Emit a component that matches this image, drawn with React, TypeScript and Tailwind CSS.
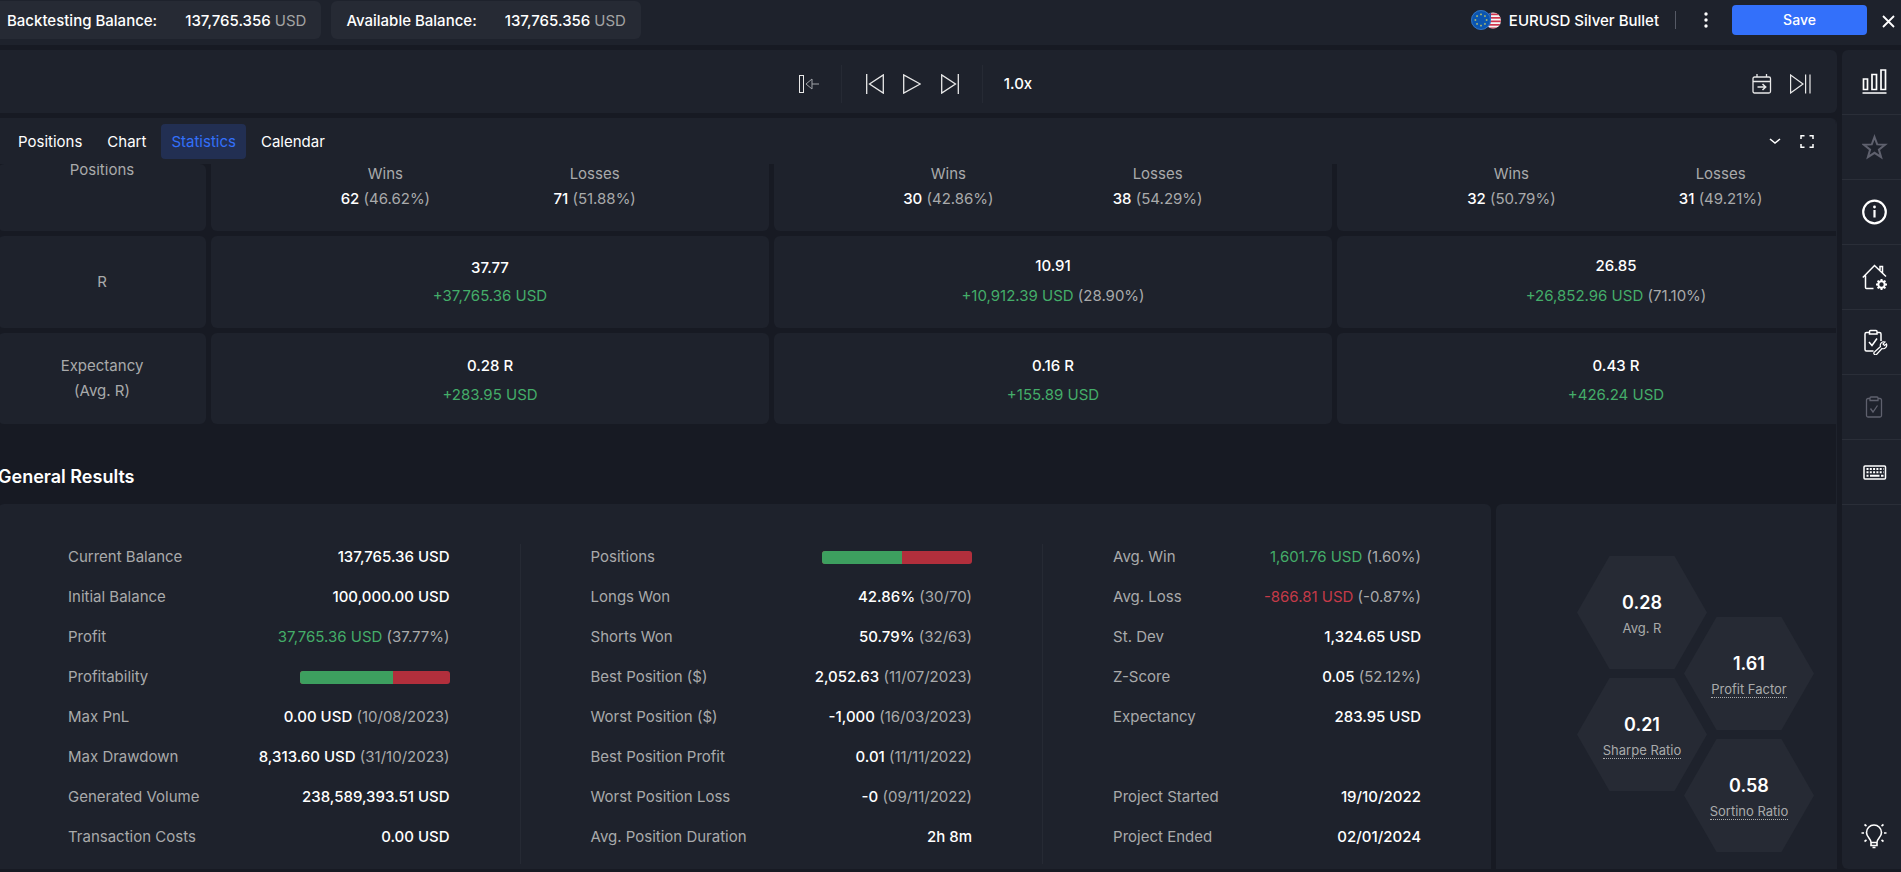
import type { ReactNode } from "react";

const font = "font-['Inter','Liberation_Sans',sans-serif]";

function Balance({ label, value }: { label: string; value: string }) {
	return (
		<div className="flex h-[38px] items-center gap-7 rounded-md bg-[#262a34] pl-[15px] pr-[15px] pt-0.5">
			<span className="font-medium">{label}</span>
			<span className="font-medium">
				{value} <span className="font-normal text-[#a3a3a3]">USD</span>
			</span>
		</div>
	);
}

function Flags() {
	return (
		<svg width="30" height="20" viewBox="0 0 30 20" aria-hidden="true">
			<clipPath id="us">
				<circle cx="22" cy="10.5" r="8" />
			</clipPath>
			<g clipPath="url(#us)">
				<rect x="12" width="20" height="20" fill="#f4f4f4" />
				{[3.5, 7, 10.5, 14, 17.5].map((y) => (
					<rect key={y} x="12" y={y} width="20" height="1.7" fill="#d0334d" />
				))}
				<rect x="12" width="8" height="10" fill="#2c4fa3" />
			</g>
			<circle cx="10" cy="10" r="10" fill="#0b55b0" />
			<circle cx="10" cy="10" r="9.5" fill="none" stroke="#3f7cc4" strokeWidth="0.8" />
			{[0, 45, 90, 135, 180, 225, 270, 315].map((a) => (
				<rect
					key={a}
					x="9.2"
					y="3.6"
					width="1.6"
					height="1.6"
					fill="#b9c46a"
					transform={`rotate(${a} 10 10)`}
				/>
			))}
		</svg>
	);
}

function TopBar() {
	return (
		<header className="flex h-[45px] items-start justify-between bg-[#1e222c] pt-px">
			<div className="-ml-2 flex gap-[10px]">
				<Balance label="Backtesting Balance:" value="137,765.356" />
				<Balance label="Available Balance:" value="137,765.356" />
			</div>
			<div className="flex h-[38px] items-center pr-[6px]">
				<Flags />
				<span className="ml-2 pt-0.5 font-medium">EURUSD Silver Bullet</span>
				<span className="ml-4 h-[18px] w-px bg-[#565a66]" />
				<button aria-label="More" className="ml-5 flex h-6 w-5 items-center justify-center">
					<svg width="4" height="16" viewBox="0 0 4 16" fill="#fff">
						<circle cx="2" cy="2" r="1.7" />
						<circle cx="2" cy="8" r="1.7" />
						<circle cx="2" cy="14" r="1.7" />
					</svg>
				</button>
				<button className="ml-4 h-[30px] w-[135px] rounded bg-[#3370fa] text-sm font-medium">
					Save
				</button>
				<button aria-label="Close" className="ml-[15px] pt-0.5">
					<svg width="13" height="13" viewBox="0 0 13 13" stroke="#fff" strokeWidth="1.8">
						<path d="M1 1l11 11M12 1L1 12" />
					</svg>
				</button>
			</div>
		</header>
	);
}

function Toolbar() {
	return (
		<div className="grid h-[63px] grid-cols-[1fr_auto_1fr] items-center rounded-r-md bg-[#1e222c] pt-1">
			<span />
			<div className="flex items-center">
				<button aria-label="Jump back">
					<svg width="20" height="18" viewBox="0 0 20 18" fill="none" stroke="#e8e8e8">
						<rect x="0.5" y="0.5" width="4" height="17" />
						<path d="M7 9l6-5v10zM13 9h7" stroke="#a0a3a8" />
					</svg>
				</button>
				<span className="ml-[22px] h-[38px] w-px bg-[#262a34]" />
				<button aria-label="Previous" className="ml-6">
					<svg width="18" height="20" viewBox="0 0 18 20" fill="none" stroke="#e8e8e8" strokeWidth="1.3">
						<path d="M0.7 0v20M17.3 0.9v18.2L3.5 10z" />
					</svg>
				</button>
				<button aria-label="Play" className="ml-[19px]">
					<svg width="18" height="20" viewBox="0 0 18 20" fill="none" stroke="#e8e8e8" strokeWidth="1.3">
						<path d="M0.7 0.9v18.2L17.2 10z" />
					</svg>
				</button>
				<button aria-label="Next" className="ml-5">
					<svg width="18" height="20" viewBox="0 0 18 20" fill="none" stroke="#e8e8e8" strokeWidth="1.3">
						<path d="M17.3 0v20M0.7 0.9v18.2L14.5 10z" />
					</svg>
				</button>
				<span className="ml-[23px] h-[38px] w-px bg-[#262a34]" />
				<button className="ml-[21px] mr-1.5 pt-0.5 font-medium">1.0x</button>
			</div>
			<div className="flex items-center justify-end gap-[18px] pr-[26px]">
				<button aria-label="Go to date">
					<svg width="20" height="20" viewBox="0 0 20 20" fill="none" stroke="#e8e8e8" strokeWidth="1.3">
						<rect x="1" y="3" width="17.5" height="16" rx="1.5" />
						<path d="M1 7.5h17.5M5 0v3M14.5 0v3" />
						<path d="M5.5 13h8M10.5 10l3.2 3-3.2 3" strokeWidth="1.5" />
					</svg>
				</button>
				<button aria-label="Play to end">
					<svg width="21" height="20" viewBox="0 0 21 20" fill="none" stroke="#e8e8e8" strokeWidth="1.2">
						<path d="M0.6 1v18L13 10zM15.6 0.5v19M20 0.5v19" />
					</svg>
				</button>
			</div>
		</div>
	);
}

function Tabs() {
	const tabs = ["Positions", "Chart", "Statistics", "Calendar"];
	return (
		<div className="flex h-[46px] items-center justify-between pl-2 pr-[22px]">
			<nav className="flex gap-[5px]">
				{tabs.map((tab) => (
					<button
						key={tab}
						className={
							tab === "Statistics"
								? "h-[35px] rounded bg-[#222f52] px-[10px] pt-0.5 text-[#3370fa]"
								: "h-[35px] px-[10px] pt-0.5"
						}
					>
						{tab}
					</button>
				))}
			</nav>
			<div className="flex items-center gap-[19px]">
				<button aria-label="Collapse">
					<svg width="12" height="7" viewBox="0 0 12 7" fill="none" stroke="#fff" strokeWidth="1.6">
						<path d="M1 1l5 4 5-4" />
					</svg>
				</button>
				<button aria-label="Full screen">
					<svg width="14" height="13" viewBox="0 0 14 13" fill="none" stroke="#fff" strokeWidth="1.5">
						<path d="M4.5 0.8H1V4M9.5 0.8H13V4M4.5 12.2H1V9M9.5 12.2H13V9" />
					</svg>
				</button>
			</div>
		</div>
	);
}

function Label({ children }: { children: ReactNode }) {
	return (
		<th className="rounded-md bg-[#1e222c] p-0 pb-0.5 font-normal leading-[25px] text-[#a9aaab]">{children}</th>
	);
}

const positions = [
	{ wins: "62", winsPct: "(46.62%)", losses: "71", lossesPct: "(51.88%)" },
	{ wins: "30", winsPct: "(42.86%)", losses: "38", lossesPct: "(54.29%)" },
	{ wins: "32", winsPct: "(50.79%)", losses: "31", lossesPct: "(49.21%)" },
];

const returns = [
	{ r: "37.77", usd: "+37,765.36 USD", pct: "" },
	{ r: "10.91", usd: "+10,912.39 USD", pct: "(28.90%)" },
	{ r: "26.85", usd: "+26,852.96 USD", pct: "(71.10%)" },
];

const expectancy = [
	{ r: "0.28 R", usd: "+283.95 USD" },
	{ r: "0.16 R", usd: "+155.89 USD" },
	{ r: "0.43 R", usd: "+426.24 USD" },
];

function ResultCell({ r, usd, pct, className }: { r: string; usd: string; pct?: string; className: string }) {
	return (
		<td className={`rounded-md bg-[#1e222c] px-0 text-center ${className}`}>
			<div className="font-medium">{r}</div>
			<div className="text-[#a9aaab]">
				<span className="text-[#44ad69]">{usd}</span> {pct}
			</div>
		</td>
	);
}

function SummaryTable() {
	return (
		<table className="-my-[5px] -ml-[7px] w-[calc(100%+71px)] table-fixed border-separate border-spacing-[5px] bg-[#171a23]">
			<colgroup>
				<col className="w-[208px]" />
				<col />
				<col />
				<col />
			</colgroup>
			<tbody>
				<tr className="h-[67px] align-top">
					<Label>
						<div className="leading-3">Positions</div>
					</Label>
					{positions.map((p) => (
						<td key={p.wins} className="rounded-b-md bg-[#1e222c] p-0 text-center leading-[25px] text-[#a9aaab]">
							<div className="mx-auto -mt-[3px] grid w-3/4 grid-cols-2">
								<span>Wins</span>
								<span>Losses</span>
								<span>
									<span className="font-medium text-white">{p.wins}</span> {p.winsPct}
								</span>
								<span>
									<span className="font-medium text-white">{p.losses}</span> {p.lossesPct}
								</span>
							</div>
						</td>
					))}
				</tr>
				<tr className="h-[92px]">
					<Label>R</Label>
					{returns.map((c) => (
						<ResultCell key={c.r} {...c} className={c.pct ? "pb-0.5 pt-0 leading-[30px]" : "py-0 leading-7"} />
					))}
				</tr>
				<tr className="h-[91px]">
					<Label>
						Expectancy
						<br />
						(Avg. R)
					</Label>
					{expectancy.map((c) => (
						<ResultCell key={c.r} {...c} className="pb-0 pt-[3px] leading-[29px]" />
					))}
				</tr>
			</tbody>
		</table>
	);
}

function Bar({ value }: { value: number }) {
	return (
		<div className="flex h-[13px] w-[150px] overflow-hidden rounded-[3px] bg-[#b22f3c]">
			<div className="bg-[#3d9f5f]" style={{ width: `${value}%` }} />
		</div>
	);
}

type Row = { label: string; value?: string; note?: string; color?: string; bar?: number };

const account: Row[] = [
	{ label: "Current Balance", value: "137,765.36 USD" },
	{ label: "Initial Balance", value: "100,000.00 USD" },
	{ label: "Profit", value: "37,765.36 USD", note: "(37.77%)", color: "text-[#44ad69]" },
	{ label: "Profitability", bar: 62 },
	{ label: "Max PnL", value: "0.00 USD", note: "(10/08/2023)" },
	{ label: "Max Drawdown", value: "8,313.60 USD", note: "(31/10/2023)" },
	{ label: "Generated Volume", value: "238,589,393.51 USD" },
	{ label: "Transaction Costs", value: "0.00 USD" },
];

const trades: Row[] = [
	{ label: "Positions", bar: 53 },
	{ label: "Longs Won", value: "42.86%", note: "(30/70)" },
	{ label: "Shorts Won", value: "50.79%", note: "(32/63)" },
	{ label: "Best Position ($)", value: "2,052.63", note: "(11/07/2023)" },
	{ label: "Worst Position ($)", value: "-1,000", note: "(16/03/2023)" },
	{ label: "Best Position Profit", value: "0.01", note: "(11/11/2022)" },
	{ label: "Worst Position Loss", value: "-0", note: "(09/11/2022)" },
	{ label: "Avg. Position Duration", value: "2h 8m" },
];

const averages: Row[] = [
	{ label: "Avg. Win", value: "1,601.76 USD", note: "(1.60%)", color: "text-[#44ad69]" },
	{ label: "Avg. Loss", value: "-866.81 USD", note: "(-0.87%)", color: "text-[#c53a48]" },
	{ label: "St. Dev", value: "1,324.65 USD" },
	{ label: "Z-Score", value: "0.05", note: "(52.12%)" },
	{ label: "Expectancy", value: "283.95 USD" },
];

const dates: Row[] = [
	{ label: "Project Started", value: "19/10/2022" },
	{ label: "Project Ended", value: "02/01/2024" },
];

function Rows({ rows }: { rows: Row[] }) {
	return (
		<>
			{rows.map((row) => (
				<div key={row.label} className="flex h-10 items-center justify-between pb-3.5">
					<dt className="text-[#a9aaab]">{row.label}</dt>
					<dd className="text-[#a9aaab]">
						{row.bar ? (
							<Bar value={row.bar} />
						) : (
							<>
								<span className={row.color ?? "font-medium text-white"}>{row.value}</span> {row.note}
							</>
						)}
					</dd>
				</div>
			))}
		</>
	);
}

function Hexagon({ value, label, hint }: { value: string; label: string; hint?: boolean }) {
	return (
		<div className="flex h-[113px] w-[130px] flex-col items-center justify-center bg-[#262a34] pt-0.5 [clip-path:polygon(25%_0,75%_0,100%_50%,75%_100%,25%_100%,0_50%)]">
			<div className="mb-1.5 text-lg font-semibold leading-6">{value}</div>
			<div
				className={
					hint
						? "border-b border-dotted border-[#a9aaab] text-[13px] leading-[15px] text-[#a9aaab]"
						: "border-b border-transparent text-[13px] leading-[15px] text-[#a9aaab]"
				}
			>
				{label}
			</div>
		</div>
	);
}

function GeneralResults() {
	return (
		<section className="-ml-0.5 flex grow flex-col">
			<h2 className="flex h-[80px] items-center pt-[26px] text-lg font-semibold">General Results</h2>
			<div className="flex grow gap-[5px]">
				<dl className="grid grow grid-cols-[35%_35%_30%] rounded-t-md bg-[#1e222c] pb-[5px] pt-10">
					<div className="border-r border-[#262a34] px-[70px]">
						<Rows rows={account} />
					</div>
					<div className="border-r border-[#262a34] px-[70px]">
						<Rows rows={trades} />
					</div>
					<div className="px-[70px]">
						<Rows rows={averages} />
						<div className="h-10" />
						<Rows rows={dates} />
					</div>
				</dl>
				<div className="flex w-[340px] shrink-0 items-start rounded-tl-md bg-[#1e222c] pl-[81px] pt-[52px]">
					<div className="flex flex-col gap-[9px]">
						<Hexagon value="0.28" label="Avg. R" />
						<Hexagon value="0.21" label="Sharpe Ratio" hint />
					</div>
					<div className="-ml-[23px] mt-[61px] flex flex-col gap-[9px]">
						<Hexagon value="1.61" label="Profit Factor" hint />
						<Hexagon value="0.58" label="Sortino Ratio" hint />
					</div>
				</div>
			</div>
		</section>
	);
}

function SideItem({ label, children }: { label: string; children: ReactNode }) {
	return (
		<button
			aria-label={label}
			className="flex h-[65px] w-full items-center justify-center border-b border-[#2a2e38] pl-1.5"
		>
			<svg width="26" height="26" viewBox="0 0 26 26" fill="none" stroke="#fff" strokeWidth="1.5">
				{children}
			</svg>
		</button>
	);
}

function Sidebar() {
	return (
		<aside className="flex w-[59px] shrink-0 flex-col rounded-l-md bg-[#1e222c]">
			<SideItem label="Statistics">
				<path d="M1.5 10h4v10.5h-4zM10 5.5h4.5v15H10zM19 1h4.5v19.5H19zM0.5 24h24" strokeWidth="1.7" />
			</SideItem>
			<SideItem label="Favorites">
				<path
					stroke="#5f616e"
					strokeWidth="2"
					d="M12.5 3l2.7 7.400 7.900.3-6.200 4.900 2.200 7.600-6.600-4.400-6.600 4.400 2.200-7.600L1.900 10.700l7.900-.3z"
				/>
			</SideItem>
			<SideItem label="Info">
				<circle cx="12.5" cy="13" r="11.3" strokeWidth="2.2" />
				<path d="M12.5 11v7.5" strokeWidth="2.2" />
				<circle cx="12.5" cy="8" r="1.4" fill="#fff" stroke="none" />
			</SideItem>
			<SideItem label="Home settings">
				<path d="M0.8 13.5L12.5 1.5l11.5 11M3.5 11.5v12a1 1 0 0 0 1 1h7M18 6V2.5h2.5V9" />
				<circle cx="19.5" cy="20.5" r="3.2" strokeWidth="2" />
				<path
					strokeWidth="2"
					d="M19.5 15v2M19.5 24v2M14 20.5h2M23 20.5h2M15.6 16.6l1.4 1.4M22 23l1.4 1.4M15.6 24.4l1.4-1.4M22 18l1.4-1.4"
				/>
			</SideItem>
			<SideItem label="Checklist settings">
				<path d="M7.5 3.5h-3A1.5 1.5 0 0 0 3 5v15.5A1.5 1.5 0 0 0 4.5 22h7M15 3.5h2.5A1.5 1.5 0 0 1 19 5v7M7.5 2.5a1 1 0 0 1 1-1H14a1 1 0 0 1 1 1V5H7.5zM7 13l3 3.5 5-7" />
				<path
					strokeWidth="1.2"
					d="M12.5 23l6-5.5a3.5 3.5 0 0 1 4.5-4.5l-2 2 1.5 1.5 2-1.5a3.5 3.5 0 0 1-4.5 4.5l-5.5 6a1.5 1.5 0 0 1-2-2.5z"
				/>
			</SideItem>
			<SideItem label="Checklist">
				<path
					stroke="#5f616e"
					strokeWidth="1.3"
					d="M8 4.5H6A1.5 1.500 0 0 0 4.5 6v15.5A1.5 1.5 0 0 0 6 23h12a1.5 1.5 0 0 0 1.5-1.5V6A1.5 1.5 0 0 0 18 4.5h-2M8 4a1 1 0 0 1 1-1h6a1 1 0 0 1 1 1v2.500H8zM8.5 14.500l2.5 3.500 4.5-6.500"
				/>
			</SideItem>
			<SideItem label="Keyboard">
				<rect x="2" y="7" width="21.5" height="13" rx="1" />
				<path strokeDasharray="2 1.3" strokeWidth="2" d="M4.5 10h17M4.5 13.2h17" />
				<path strokeWidth="2" d="M4.5 16.8h2M8 16.8h9.5M19 16.8h2.5" />
			</SideItem>
			<button aria-label="Tips" className="mt-auto flex justify-center pb-5 pl-[5px]">
				<svg width="26" height="26" viewBox="0 0 26 26" fill="none" stroke="#fff" strokeWidth="1.6">
					<path d="M10 19.5c0-4-4.5-5-4.5-10a7.5 7.5 0 0 1 15 0c0 5-4.5 6-4.5 10zM10 19.5v3h6v-3M11.5 24.5h3" />
					<path d="M0.5 10H3M23 10h2.5M3.5 1.5l2 1.5M22.5 1.5l-2 1.5M3.5 18.5l2-1.5M22.5 18.5l-2-1.5" />
				</svg>
			</button>
		</aside>
	);
}

export default function App() {
	return (
		<div className={`${font} flex min-h-screen flex-col overflow-hidden bg-[#171a23] text-[15px] text-white`}>
			<TopBar />
			<div className="flex grow gap-[5px] pb-[3px] pt-[5px]">
				<main className="flex min-w-0 grow flex-col gap-[5px]">
					<Toolbar />
					<div className="flex grow flex-col overflow-hidden rounded-tr-md border-r border-[#1e222c]">
						<div className="bg-[#1e222c]">
							<Tabs />
						</div>
						<div className="overflow-hidden">
							<SummaryTable />
						</div>
						<GeneralResults />
					</div>
				</main>
				<Sidebar />
			</div>
		</div>
	);
}
